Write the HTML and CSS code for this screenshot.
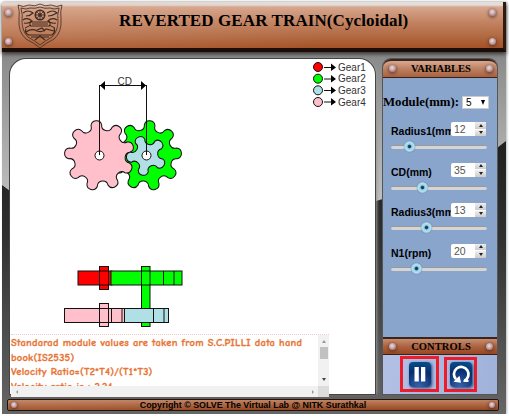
FILE: index.html
```
<!DOCTYPE html>
<html lang="en">
<head>
<meta charset="utf-8">
<title>Reverted Gear Train</title>
<link rel="stylesheet" href="styles.css">
</head>
<body>
<div class="app">
  <svg class="backdrop" width="504" height="412" viewBox="0 0 504 412" preserveAspectRatio="none">
    <defs>
      <linearGradient id="light" x1="0" y1="0" x2="0" y2="1"><stop offset="0" stop-color="#777"/><stop offset=".5" stop-color="#c2c2c2"/></linearGradient>
      <linearGradient id="dark" x1="0" y1="0" x2="0" y2="1"><stop offset="0" stop-color="#202020"/><stop offset=".35" stop-color="#303030"/><stop offset="1" stop-color="#666"/></linearGradient>
    </defs>
    <rect width="504" height="412" fill="url(#light)"/>
    <path d="M0 183L8 189Q200 235 374 199Q460 175 495 146L504 139V412H0Z" fill="url(#dark)"/>
  </svg>
  <header class="header">
    <svg class="crest" width="46" height="46" viewBox="0 0 46 46" fill="none" stroke="#3e2a22" stroke-width=".8">
      <path d="M1 2Q6 5 12 2Q18 4 23 1Q28 4 34 2Q40 5 45 2Q43 8 44 16Q45 29 37 36Q29 40 23 45Q17 40 9 36Q1 29 2 16Q3 8 1 2Z"/>
      <path d="M4 5Q9 7 13 5Q18 6 23 4Q28 6 33 5Q37 7 42 5Q40 13 41 18Q41 28 35 34Q28 38 23 42Q18 38 11 34Q5 28 5 18Q6 13 4 5Z"/>
      <circle cx="23" cy="12" r="4.7" stroke-width="1.6"/><circle cx="23" cy="12" r="1.5"/><path d="M18 12H28M23 7V17M20 9L26 15M26 9L20 15"/>
      <path d="M6 10Q11 6 16 10Q13 13 9 13M30 10Q36 6 40 10Q35 13 31 13M6 17Q10 14 15 18Q12 21 7 20M40 17Q35 14 31 18Q34 21 39 20" stroke-width="1.2"/>
      <path d="M13 19H33V23H13ZM8 25L14 22M38 25L32 22M15 21H31" stroke-width="1"/>
      <path d="M9 29Q15 25 20 28Q26 30 29 26L37 28M11 32H35M14 34H32M20 27L25 25L28 28M18 37L23 33L28 37M9 26Q7 30 12 32M37 25Q39 29 35 32" stroke-width="1.2"/>
    </svg>
    <h1 class="title">REVERTED GEAR TRAIN(Cycloidal)</h1>
    <div class="rivets"><i class="rivet"></i><i class="rivet"></i></div>
    <div class="rivets rivets-left"><i class="rivet"></i><i class="rivet"></i></div>
  </header>
  <main class="main">
    <section class="stage">
      <svg class="drawing" width="365" height="275" viewBox="10 59 365 275">
        <defs>
          <path id="gear9" d="M30.04-5.3A5.35 5.35 0 0 1 30.04 5.3A5.35 5.35 0 0 0 26.41 15.25A5.35 5.35 0 0 1 19.6 23.36A5.35 5.35 0 0 0 10.43 28.66A5.35 5.35 0 0 1 0 30.5A5.35 5.35 0 0 0-10.43 28.66A5.35 5.35 0 0 1-19.6 23.36A5.35 5.35 0 0 0-26.41 15.25A5.35 5.35 0 0 1-30.04 5.3A5.35 5.35 0 0 0-30.04-5.3A5.35 5.35 0 0 1-26.41-15.25A5.35 5.35 0 0 0-19.6-23.36A5.35 5.35 0 0 1-10.43-28.66A5.35 5.35 0 0 0 0-30.5A5.35 5.35 0 0 1 10.43-28.66A5.35 5.35 0 0 0 19.6-23.36A5.35 5.35 0 0 1 26.41-15.25A5.35 5.35 0 0 0 30.04-5.3Z"/>
          <path id="gear5" d="M15.69-5.1A5.15 5.15 0 0 1 15.69 5.1A5.15 5.15 0 0 0 9.7 13.35A5.15 5.15 0 0 1 0 16.5A5.15 5.15 0 0 0-9.7 13.35A5.15 5.15 0 0 1-15.69 5.1A5.15 5.15 0 0 0-15.69-5.1A5.15 5.15 0 0 1-9.7-13.35A5.15 5.15 0 0 0 0-16.5A5.15 5.15 0 0 1 9.7-13.35A5.15 5.15 0 0 0 15.69-5.1Z"/>
        </defs>
        <g stroke="#111" stroke-width="1">
          <use href="#gear9" transform="translate(146.5 155.5) rotate(-4) scale(1.01)" fill="#0f0"/>
          <use href="#gear9" transform="translate(99.5 155.5) rotate(-16) scale(1.01)" fill="#ffc0cb"/>
          <use href="#gear5" transform="translate(146.5 155.5) rotate(30)" fill="#b0e0e6"/>
          <circle cx="99.5" cy="155.5" r="4.5" fill="#fff"/><circle cx="146.5" cy="155.5" r="4.5" fill="#fff"/>
          <path d="M99.5 85V155M146.5 85V155M100 85.5H146" fill="none"/>
        </g>
        <path d="M100 85.5L105 81V90ZM146 85.5L141 81V90Z"/>
        <text x="117.5" y="85" class="note">CD</text>
        <g stroke="#111">
          <rect x="141.5" y="266.5" width="8.5" height="60" fill="#0f0"/>
          <rect x="78" y="271" width="34" height="14" fill="#f00"/><rect x="111" y="271" width="71" height="14" fill="#0f0"/>
          <rect x="99.5" y="266.5" width="9" height="23" fill="#f00"/>
          <path d="M99.5 271H109M99.5 285H109M141.5 271V285M150 271V285M163.5 271V285M174 271V285" fill="none"/>
          <rect x="64.5" y="308.5" width="60" height="14" fill="#ffc0cb"/><rect x="99.5" y="303.5" width="9" height="23" fill="#ffc0cb"/>
          <path d="M99.5 308.5H109M99.5 322.5H109M111.5 308V322M122 308V322" fill="none"/>
          <rect x="124.5" y="308.5" width="44" height="14" fill="#b0e0e6"/>
          <path d="M153.5 308V322M164 308V322" fill="none"/>
        </g>
        <g stroke="#111">
          <circle cx="318" cy="67" r="4.5" fill="#f00"/><circle cx="318" cy="78.7" r="4.5" fill="#0f0"/><circle cx="318" cy="90.3" r="4.5" fill="#b0e0e6"/><circle cx="318" cy="102" r="4.5" fill="#ffc0cb"/>
          <path d="M324 67.5H334M324 79H334M324 90.5H334M324 102H334"/>
        </g>
        <path d="M331 63.5L336 67.5L331 71ZM331 75L336 79L331 82.5ZM331 86.5L336 90.5L331 94ZM331 98L336 102L331 105.5Z"/>
        <g class="note"><text x="338" y="70.5">Gear1</text><text x="338" y="82.2">Gear2</text><text x="338" y="93.8">Gear3</text><text x="338" y="105.5">Gear4</text></g>
      </svg>
      <div class="results">
        <div class="result-text">
          <p>Standarad module values are taken from S.C.PILLI data hand</p>
          <p>book(IS2535)</p>
          <p>Velocity Ratio=(T2*T4)/(T1*T3)</p>
          <p>Velocity ratio is : 2.24</p>
        </div>
        <div class="vbar"><i class="arrow up"></i><i class="thumb"></i><i class="arrow down"></i></div>
        <div class="hbar"><i class="arrow left"></i><i class="arrow right"></i></div>
      </div>
    </section>
    <aside class="side">
      <h2 class="bar"><i class="rivet"></i><span>VARIABLES</span><i class="rivet"></i></h2>
      <div class="variables">
        <div class="module"><span>Module(mm):</span><div class="select">5<i class="caret"></i></div></div>
        <div class="field"><div class="row"><label>Radius1(mm)</label><div class="spinner"><b>12</b><span class="steps"><i></i><i></i></span></div></div><div class="track"><i class="handle h1"></i></div></div>
        <div class="field"><div class="row"><label>CD(mm)</label><div class="spinner"><b>35</b><span class="steps"><i></i><i></i></span></div></div><div class="track"><i class="handle h2"></i></div></div>
        <div class="field"><div class="row"><label>Radius3(mm)</label><div class="spinner"><b>13</b><span class="steps"><i></i><i></i></span></div></div><div class="track"><i class="handle h3"></i></div></div>
        <div class="field"><div class="row"><label>N1(rpm)</label><div class="spinner"><b>20</b><span class="steps"><i></i><i></i></span></div></div><div class="track"><i class="handle h4"></i></div></div>
      </div>
      <h2 class="bar bar-low"><i class="rivet"></i><span>CONTROLS</span><i class="rivet"></i></h2>
      <div class="controls">
        <div class="control pause"><svg width="22" height="25" viewBox="0 0 22 25"><path d="M5.500 5H9.800V19.500H5.500ZM12 5H16.300V19.500H12Z" fill="#fff"/></svg></div>
        <div class="control reset"><svg width="22" height="25" viewBox="0 0 22 25"><path d="M14.500 18.700A7.300 7.300 0 1 0 6 17.300" fill="none" stroke="#fff" stroke-width="2.700"/><path d="M3.500 19.800L11 20.800L9.500 13.800Z" fill="#fff"/><path d="M13.500 19H18.500" stroke="#fff" stroke-width="2"/></svg></div>
      </div>
    </aside>
  </main>
  <footer class="footer"><i class="rivet"></i><span>Copyright © SOLVE The Virtual Lab @ NITK Surathkal</span><i class="rivet"></i></footer>
</div>
</body>
</html>
```
FILE: styles.css
```
* { box-sizing: border-box; }
body { margin: 0; background: #fff; overflow: hidden; font-family: "Liberation Sans", Arial, sans-serif; }
h1, h2, p { margin: 0; }
i { display: block; font-style: normal; }
.app { position: relative; width: 504px; height: 412px; margin: 2px 0 0 2px; display: flex; flex-direction: column; box-shadow: 1px 0 2px #bbb; }
.backdrop { position: absolute; inset: 0; z-index: -1; }
.rivet { width: 7px; height: 7px; flex: none; border-radius: 50%; background: radial-gradient(circle at 45% 40%, #e4ccd0 15%, #b99698 55%, #795151); box-shadow: 0 1px 3px 1px #4a2c2490; }
.header { position: relative; height: 50px; flex: none; display: flex; padding-left: 15px; background: radial-gradient(ellipse 300px 50px at 8% 50%, #d8a58a55, transparent), linear-gradient(#e4dedb 0 3px, #d6a78e 5px, #c38362 20px, #b06840 35px, #a65328 45px); border-right: 3px solid #30190f; border-bottom: 4px solid #1b0d07; box-shadow: 0 2px 4px #333; }
.crest { flex: none; margin-top: 1px; }
.title { width: 292px; margin: 8px 0 0 56px; font: bold 17px/22px "Liberation Serif", serif; white-space: nowrap; letter-spacing: .1px; }
.rivets { display: flex; flex-direction: column; gap: 22px; margin: 7px 7px 0 auto; }
.rivets-left { position: absolute; left: 3px; top: 0; margin: 7px 0 0; }
.main { display: flex; gap: 8px; padding: 7px 9px 0 8px; height: 343px; flex: none; }
.stage { width: 365px; height: 335px; flex: none; background: #fff; border-radius: 16px 16px 0 0; box-shadow: 0 0 0 1px #444, 2px 0 3px #999; }
.drawing { display: block; }
.note { font: 10px "Liberation Sans", sans-serif; fill: #333; }
.results { position: relative; width: 318px; height: 63px; margin-left: 1px; background: #fff; border-top: 1px dotted #f0c9c9; display: grid; grid-template: 51px 11px / 307px 11px; }
.result-text { overflow: hidden; color: #e87333; font: bold 10.5px/14.5px "Comic Sans MS", "Comic Neue", Lato, sans-serif; white-space: nowrap; padding-top: 1px; letter-spacing: .24px; -webkit-text-stroke: .3px #e87333; }
.vbar { background: #f1f1f1; display: flex; flex-direction: column; align-items: center; padding-top: 5px; }
.hbar { grid-column: 1 / 3; background: linear-gradient(90deg, #f1f1f1 307px, #dcdcdc 307px); display: flex; justify-content: space-between; align-items: center; padding: 0 13px 0 3px; }
.thumb { width: 8px; height: 12px; background: #c1c1c1; margin: 4px 0 19px; }
.arrow { border: 2.5px solid transparent; width: 0; height: 0; }
.up { border: solid transparent; border-width: 0 2.5px 3px; border-bottom-color: #999; }
.down { border: solid transparent; border-width: 3px 2.5px 0; border-top-color: #444; }
.left { border-right-color: #999; }
.right { border-left-color: #999; }
.side { width: 114px; height: 335px; flex: none; display: flex; flex-direction: column; background: #8aa5cc; border-radius: 8px 8px 0 0; box-shadow: 0 0 0 1px #555; }
.bar { height: 19px; flex: none; display: flex; align-items: center; justify-content: space-between; padding: 0 4px 2px 6px; border-top: 2px solid #3a241c; border-bottom: 1px solid #39221a; border-radius: 8px 8px 0 0; background: linear-gradient(#d7a991, #bd8060 50%, #a8623f); font: bold 10.5px "Liberation Serif", serif; }
.bar-low { border-radius: 0; background: linear-gradient(#c68e70, #ad6340 50%, #984721); height: 18px; letter-spacing: .1px; padding-bottom: 0; }
.variables { height: 259px; flex: none; padding-top: 14px; }
.module { display: flex; align-items: center; gap: 3px; height: 20px; margin-bottom: 10px; font: bold 12.8px "Liberation Serif", serif; white-space: nowrap; }
.module > span { width: 76px; }
.select { width: 27px; height: 13px; background: #fff; border: 1px solid #ccc; padding: 0 3px; display: flex; align-items: center; justify-content: space-between; font: 10px "Liberation Sans", sans-serif; }
.caret { border: solid transparent; border-width: 5px 2.5px 0; border-top-color: #000; }
.field { height: 40.5px; padding: 0 10px 0 8px; }
.row { display: flex; height: 15px; }
.row label { width: 60px; height: 18px; padding-top: 3px; overflow: hidden; font: bold 10.5px/13px "Liberation Sans", sans-serif; }
.spinner { width: 35px; height: 14px; display: flex; background: #fff; border-radius: 2px; flex: none; }
.spinner b { flex: 1; padding-left: 3px; font: 10.5px/14px "Liberation Sans", sans-serif; color: #555; }
.steps { width: 11px; display: grid; gap: 1px; }
.steps i { background: linear-gradient(#eee, #ccc); display: grid; place-items: center; }
.steps i::after { content: ""; border: solid transparent; border-width: 0 2.5px 3px; border-bottom-color: #222; }
.steps i + i::after { border-width: 3px 2.5px 0; border-top-color: #222; }
.track { position: relative; width: 96px; height: 4px; margin-top: 8px; border-radius: 2px; background: #d5d5d5; border-top: 1px solid #999; }
.handle { position: absolute; top: -5px; width: 11px; height: 11px; border-radius: 50%; background: radial-gradient(#153e57 0 1.2px, #91cce5 2.3px, #b8e0f2 4px, #548cab); box-shadow: 0 0 1px #36688a; }
.h1 { left: 13px; }
.h2 { left: 26px; }
.h3 { left: 30px; }
.h4 { left: 20px; }
.controls { flex: 1; display: flex; gap: 5px; padding: 1px 0 0 17px; background: linear-gradient(100deg, #b3c0e5, #a0b2da); }
.control { height: 36px; border: 3px solid #ed1c2c; display: flex; align-items: center; justify-content: center; }
.control svg { border-radius: 4px; background: radial-gradient(circle at 45% 100%, #3565ac, #062d70 60%, #0a5690); box-shadow: 1px 1px 3px #24416d; }
.pause { width: 39px; }
.reset { width: 33px; margin-top: 1px; height: 35px; }
.footer { width: 492px; height: 12px; margin: 4px 0 0 5px; display: flex; align-items: center; justify-content: space-between; padding: 0 3px; border: 1px solid #21130d; background: linear-gradient(90deg, #d0a08830, transparent 50%), linear-gradient(#c08363, #98471f); border-radius: 2px; font: bold 8.9px/10px "Liberation Sans", sans-serif; }
.footer .rivet { width: 6px; height: 6px; }
```
